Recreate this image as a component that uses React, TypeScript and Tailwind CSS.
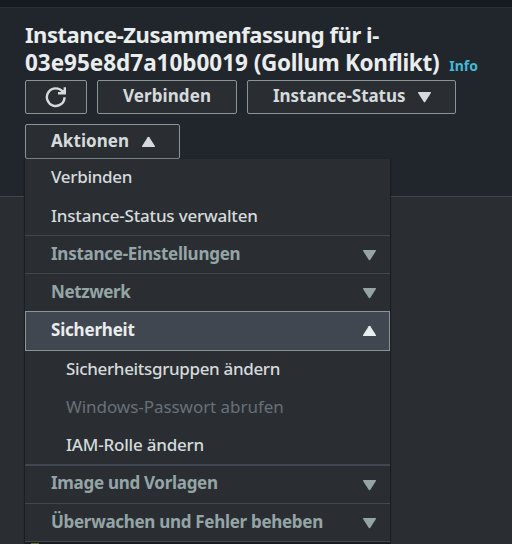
import React from "react";

const DOWN = "M.6 0h11.8a.6.6 0 0 1 .5.9L7.3 9.7a1 1 0 0 1-1.6 0L.1.9A.6.6 0 0 1 .6 0Z";

function Caret({ up = false, className = "" }: { up?: boolean; className?: string }) {
  return (
    <svg width="13" height="11" viewBox="0 0 13 11" className={`shrink-0 ${up ? "rotate-180" : ""} ${className}`} fill="currentColor">
      <path d={DOWN} />
    </svg>
  );
}

function Section({ label, tracking, className = "h-[38px] border-t" }: { label: string; tracking: string; className?: string }) {
  return (
    <div className={`flex items-center justify-between border-[#414750] pr-[14px] pl-[26px] text-[17px] font-bold text-[#95a5a6] ${className}`}>
      <span className={`-mt-0.5 ${tracking}`}>{label}</span>
      <Caret className="mt-px" />
    </div>
  );
}

const button = "flex h-[34px] items-center rounded-[2px] border border-[#879596] bg-[#2a2e33] text-[17px] font-bold text-[#d5dbdb]";

export default function App() {
  return (
    <div className="relative h-[544px] w-[512px] overflow-hidden bg-[#2a2e33] font-['Noto_Sans',sans-serif] whitespace-nowrap">
      <div className="h-[7px] bg-[#161a21]" />
      <header className="h-[190px] border-t border-b border-t-[#2a2e33] border-b-[#414750] bg-[#21252c] px-[25px] pt-[12px]">
        <h1 className="text-[22px] leading-7 font-bold text-[#eaeded]">
          <div className="tracking-[-0.46px]">Instance-Zusammenfassung für i-</div>
          <div className="flex h-7 items-baseline pt-px text-[22.5px]">
            <span className="tracking-[-0.02px]">03e95e8d7a10b0019&nbsp;</span>
            <span className="tracking-[-0.32px]">(Gollum Konflikt)</span>
            <span className="ml-2.5 text-[14px] leading-none text-[#44b9d6]">Info</span>
          </div>
        </h1>
        <div className="mt-1 flex gap-2.5">
          <div className={`${button} w-[62px] justify-center`}>
            <svg width="22" height="22" viewBox="0 0 22 22" fill="none" stroke="currentColor" strokeWidth="2.4">
              <path d="M17.8 6A8.8 8.8 0 1 0 19.5 11.2" />
              <path d="M19.8 1.2v6.1H13" />
              <path d="M16 4.8l3.8-1.3v3.8h-3.8z" fill="currentColor" stroke="none" />
            </svg>
          </div>
          <div className={`${button} w-[140px] justify-center`}><span className="-mt-0.5 tracking-[0.1px]">Verbinden</span></div>
          <div className={`${button} w-[209px] pl-[25px]`}>
            <span className="-mt-0.5 w-[145px] tracking-[-0.04px]">Instance-Status</span><Caret />
          </div>
        </div>
        <div className={`${button} mt-2.5 h-[35px] w-[155px] pl-[25px]`}>
          <span className="-mt-0.5 w-[91px] tracking-[0.07px]">Aktionen</span><Caret up />
        </div>
      </header>

      <div className="absolute top-[159px] left-[25px] w-[365px] bg-[#2a2e33] text-[17px] font-medium text-[#d5dbdb] shadow-[0_1px_1px_1px_#1b1e22]">
        <div className="flex h-[37px] items-center pl-[26px]"><span className="-mt-0.5 tracking-[-0.3px]">Verbinden</span></div>
        <div className="flex h-[39px] items-center pl-[26px]"><span className="tracking-[-0.2px]">Instance-Status verwalten</span></div>
        <Section label="Instance-Einstellungen" tracking="tracking-[-0.26px]" />
        <Section label="Netzwerk" tracking="tracking-[-0.4px]" />
        <div className="flex h-10 items-center justify-between border border-[#879596] bg-[#414750] pr-[13px] pl-[25px] font-bold text-[#eaeded]">
          <span className="-mt-0.5 tracking-[-0.2px]">Sicherheit</span><Caret up className="-mt-0.5" />
        </div>
        <div className="flex h-[37px] items-center pl-[41px]"><span className="-mt-0.5 tracking-[-0.34px]">Sicherheitsgruppen ändern</span></div>
        <div className="flex h-[38px] items-center pl-[41px] font-normal text-[#687078]"><span className="tracking-[-0.05px]">Windows-Passwort abrufen</span></div>
        <div className="flex h-[38px] items-center pl-[41px]"><span className="tracking-[-0.2px]">IAM-Rolle ändern</span></div>
        <Section label="Image und Vorlagen" tracking="tracking-[-0.3px] pb-px" className="h-[39px] border-t-2" />
        <Section label="Überwachen und Fehler beheben" tracking="tracking-[-0.3px]" />
        <div className="h-px bg-[#414750]" />
      </div>
      <div className="absolute bottom-0 left-[25px] h-px w-[365px] bg-[#1b171d]">
        <div className="ml-1.5 h-px w-2 bg-[#587519]" />
      </div>
    </div>
  );
}
